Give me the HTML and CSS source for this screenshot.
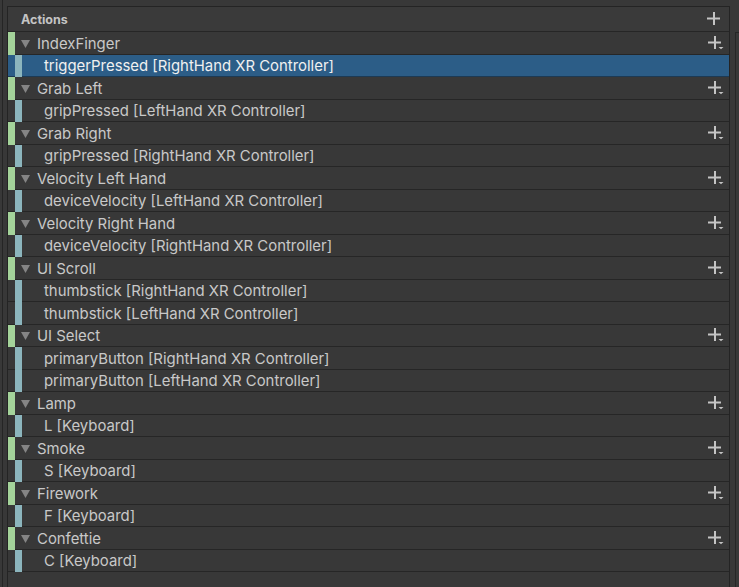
FILE: index.html
```html
<!DOCTYPE html>
<html>
<head>
<meta charset="utf-8">
<link rel="stylesheet" href="styles.css">
</head>
<body>
<div class="frame">
  <div class="gutter-left"></div>
  <div class="panel">
    <div class="header">
      <span class="title">Actions</span>
      <svg class="plus" width="16" height="14" viewBox="0 0 16 14"><path d="M6 0h2v13H6zM0 5.5h13v2H0z" fill="#c4c4c4"/></svg>
    </div>
    <div class="list" id="list"></div>
  </div>
  <div class="gutter-right"></div>
</div>
<script src="app.js"></script>
</body>
</html>
```
FILE: app.js
```js
const data = [
  ["IndexFinger", ["triggerPressed [RightHand XR Controller]"]],
  ["Grab Left", ["gripPressed [LeftHand XR Controller]"]],
  ["Grab Right", ["gripPressed [RightHand XR Controller]"]],
  ["Velocity Left Hand", ["deviceVelocity [LeftHand XR Controller]"]],
  ["Velocity Right Hand", ["deviceVelocity [RightHand XR Controller]"]],
  ["UI Scroll", ["thumbstick [RightHand XR Controller]", "thumbstick [LeftHand XR Controller]"]],
  ["UI Select", ["primaryButton [RightHand XR Controller]", "primaryButton [LeftHand XR Controller]"]],
  ["Lamp", ["L [Keyboard]"]],
  ["Smoke", ["S [Keyboard]"]],
  ["Firework", ["F [Keyboard]"]],
  ["Confettie", ["C [Keyboard]"]]
];
const list = document.getElementById('list');
const plus = '<svg class="plus" width="16" height="14" viewBox="0 0 16 14"><path d="M6 0h2v13H6zM0 5.5h13v2H0z" fill="#c4c4c4"/><path d="M10.5 11h5l-2.5 2.2z" fill="#c4c4c4"/></svg>';
let first = true;
for (const [name, binds] of data) {
  const g = document.createElement('div');
  g.className = 'row group';
  g.innerHTML = '<div class="stripe green"></div><div class="body"><svg class="tri" width="9" height="8" viewBox="0 0 9 8"><path d="M0 0h9L4.5 8z" fill="#858585"/></svg><span class="label">' + name + '</span>' + plus + '</div>';
  list.appendChild(g);
  for (const b of binds) {
    const r = document.createElement('div');
    r.className = 'row bind' + (first ? ' selected' : '');
    first = false;
    r.innerHTML = '<div class="pad"></div><div class="stripe teal"></div><div class="body"><span class="label">' + b + '</span></div>';
    list.appendChild(r);
  }
}
```
FILE: styles.css
```css
html, body {
  margin: 0;
  padding: 0;
  background: #383838;
  overflow: hidden;
  height: 100%;
}
body {
  font-family: Inter, "Noto Sans", sans-serif;
  color: #c8c8c8;
}
.frame {
  display: flex;
  height: 100%;
  overflow: hidden;
}
.gutter-left {
  width: 4px;
  margin-left: 2px;
  border-left: 1px solid #252525;
  flex: none;
}
.panel {
  width: 723px;
  box-sizing: border-box;
  flex: none;
  margin-top: 6px;
  border: 1px solid #242424;
  border-bottom: none;
  background: #383838;
  overflow: hidden;
}
.gutter-right {
  flex: 1;
  margin-left: 5px;
  margin-top: 32px;
  border-left: 1px solid #262626;
  border-top: 1px solid #262626;
}
.header {
  height: 25px;
  box-sizing: border-box;
  border-bottom: 1px solid #262626;
  display: flex;
  align-items: center;
  padding-left: 13px;
  padding-right: 6px;
  background: #3a3a3a;
}
.title {
  font-size: 12.5px;
  font-weight: 700;
  color: #c4c4c4;
  flex: 1;
}
.plus {
  flex: none;
  display: block;
}
.header .plus {
  margin-top: -1px;
}
.row {
  display: flex;
  height: 22.5px;
  box-sizing: border-box;
}
.stripe {
  width: 7px;
  flex: none;
}
.green {
  background: #a4d39a;
}
.teal {
  background: #8cb5bd;
}
.pad {
  width: 7px;
  flex: none;
  box-sizing: border-box;
  border-bottom: 1px solid #262626;
}
.body {
  flex: 1;
  display: flex;
  align-items: center;
  box-sizing: border-box;
  border-bottom: 1px solid #262626;
  font-size: 14.9px;
  padding-right: 5px;
  padding-top: 2px;
}
.label {
  flex: 1;
  white-space: nowrap;
}
.group .plus {
  margin-top: -2px;
}
.group .tri {
  margin-left: 6px;
  margin-right: 7px;
  flex: none;
  display: block;
}
.bind .body {
  padding-left: 22px;
}
.selected {
  background: #2c5d87;
}
.selected .pad,
.selected .body {
  border-bottom-color: #1c3a55;
}
.selected .label {
  color: #f0f0f0;
}
```
